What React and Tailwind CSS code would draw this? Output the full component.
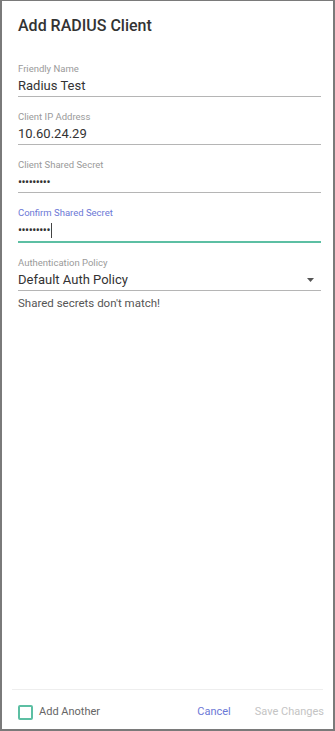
import React from 'react';

const Field = ({ label, value, focused, password, caret }) => (
  <div className="flex flex-col">
    <label className={`text-[9.5px] leading-[12px] ${focused ? 'text-[#6b78d6]' : 'text-[#9a9a9a]'}`}>
      {label}
    </label>
    <div className="flex items-center h-[18px] mt-[2px]">
      <span className={`text-[#333] ${password ? 'tracking-[-0.5px] text-[12px]' : 'text-[13px]'}`}>{value}</span>
      {caret && <span className="w-px h-[15px] bg-[#444] ml-[1px]" />}
    </div>
    <div className={focused ? 'h-[2px] mt-[2px] bg-[#5cbfa3]' : 'h-px mt-px bg-[#b5b5b5]'} />
  </div>
);

export default function App() {
  return (
    <div
      className="w-[335px] h-[731px] bg-white border-t border-l-2 border-r-2 border-b-2 border-[#7a7a7a] flex flex-col"
      style={{ fontFamily: 'Roboto, "Liberation Sans", sans-serif' }}
    >
      <div className="flex-1 pl-[16px] pr-[12px]">
        <h1 className="mt-[14px] text-[16px] font-medium text-[#333] leading-[22px]">Add RADIUS Client</h1>
        <div className="mt-[26px] flex flex-col gap-[14px]">
          <Field label="Friendly Name" value="Radius Test" />
          <Field label="Client IP Address" value="10.60.24.29" />
          <Field label="Client Shared Secret" value="•••••••••" password />
          <Field label="Confirm Shared Secret" value="•••••••••" password focused caret />
          <div className="flex flex-col">
            <label className="text-[9.5px] leading-[12px] text-[#9a9a9a]">Authentication Policy</label>
            <div className="flex items-center justify-between h-[18px] mt-[2px]">
              <span className="text-[13px] text-[#333]">Default Auth Policy</span>
              <svg width="7" height="4" viewBox="0 0 7 4" className="mr-[7px]">
                <path d="M0 0 L7 0 L3.5 4 Z" fill="#555" />
              </svg>
            </div>
            <div className="h-px mt-px bg-[#b5b5b5]" />
            <div className="mt-[4px] text-[11.5px] text-[#555]">Shared secrets don't match!</div>
          </div>
        </div>
      </div>
      <div className="mx-[10px] h-px bg-[#eeeeee]" />
      <div className="h-[39px] pt-[5px] flex items-center pl-[16px] pr-[9px]">
        <div className="w-[15px] h-[15px] border-2 border-[#5cbfa3] rounded-[2px]" />
        <span className="ml-[6px] text-[11px] text-[#666]">Add Another</span>
        <div className="flex-1" />
        <button className="text-[11px] text-[#6b78d6]">Cancel</button>
        <button className="ml-[24px] text-[11px] text-[#c4c4c4]">Save Changes</button>
      </div>
    </div>
  );
}
